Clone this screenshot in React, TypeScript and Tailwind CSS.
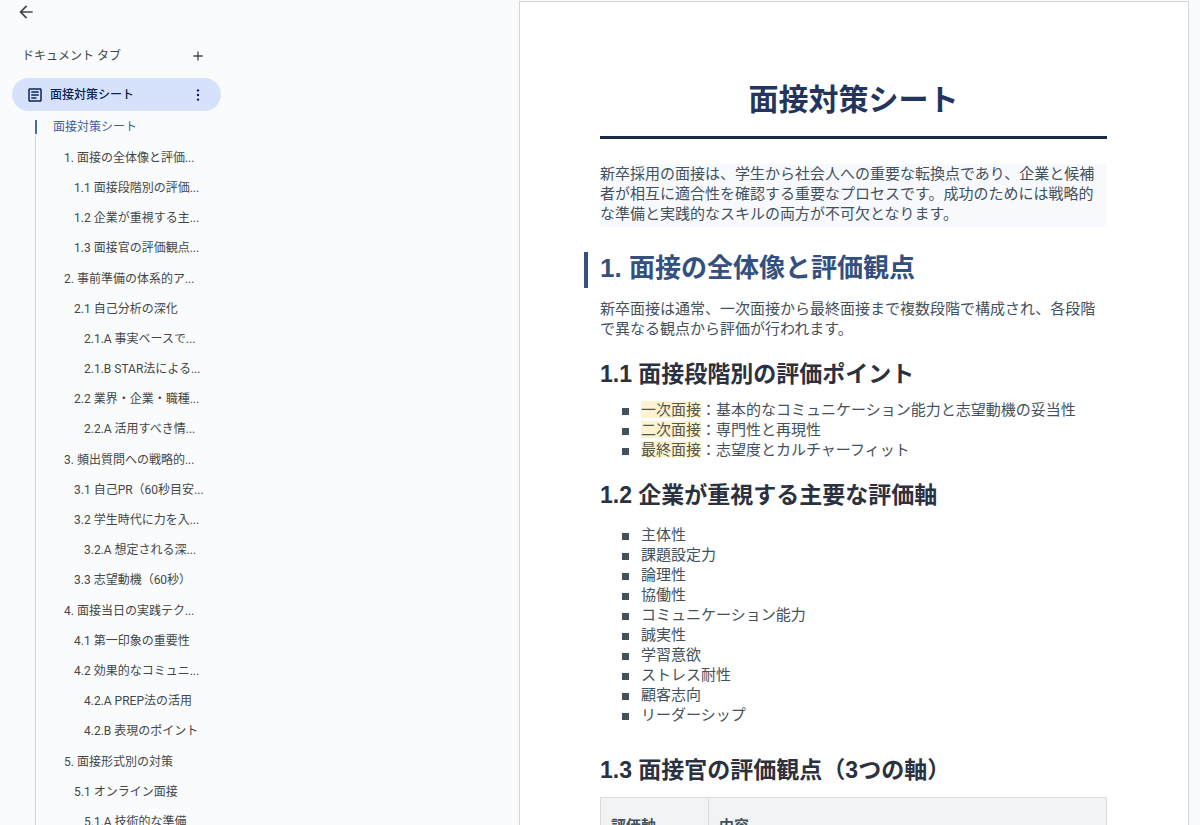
type OutlineItem = { label: string; level: 1 | 2 | 3 };

const outline: OutlineItem[] = [
  { label: "1. 面接の全体像と評価...", level: 1 },
  { label: "1.1 面接段階別の評価...", level: 2 },
  { label: "1.2 企業が重視する主...", level: 2 },
  { label: "1.3 面接官の評価観点...", level: 2 },
  { label: "2. 事前準備の体系的ア...", level: 1 },
  { label: "2.1 自己分析の深化", level: 2 },
  { label: "2.1.A 事実ベースで...", level: 3 },
  { label: "2.1.B STAR法による...", level: 3 },
  { label: "2.2 業界・企業・職種...", level: 2 },
  { label: "2.2.A 活用すべき情...", level: 3 },
  { label: "3. 頻出質問への戦略的...", level: 1 },
  { label: "3.1 自己PR（60秒目安...", level: 2 },
  { label: "3.2 学生時代に力を入...", level: 2 },
  { label: "3.2.A 想定される深...", level: 3 },
  { label: "3.3 志望動機（60秒）", level: 2 },
  { label: "4. 面接当日の実践テク...", level: 1 },
  { label: "4.1 第一印象の重要性", level: 2 },
  { label: "4.2 効果的なコミュニ...", level: 2 },
  { label: "4.2.A PREP法の活用", level: 3 },
  { label: "4.2.B 表現のポイント", level: 3 },
  { label: "5. 面接形式別の対策", level: 1 },
  { label: "5.1 オンライン面接", level: 2 },
  { label: "5.1.A 技術的な準備", level: 3 },
];

const levelClass = {
  1: "mt-px pl-7",
  2: "pl-[38px]",
  3: "pl-12",
};

const stages = [
  { name: "一次面接", text: "：基本的なコミュニケーション能力と志望動機の妥当性" },
  { name: "二次面接", text: "：専門性と再現性" },
  { name: "最終面接", text: "：志望度とカルチャーフィット" },
];

const criteria = [
  "主体性",
  "課題設定力",
  "論理性",
  "協働性",
  "コミュニケーション能力",
  "誠実性",
  "学習意欲",
  "ストレス耐性",
  "顧客志向",
  "リーダーシップ",
];

function Bullet() {
  return <span className="mt-[3px] size-[7px] shrink-0 bg-[#43515c]" />;
}

function Sidebar() {
  return (
    <aside className="w-[221px] shrink-0 overflow-hidden font-['Roboto','Noto_Sans_CJK_JP',sans-serif] text-xs text-[#444746]">
      <button aria-label="戻る" className="ml-3.5 flex size-6 items-center justify-center">
        <svg viewBox="0 0 24 24" className="size-5" fill="currentColor">
          <path d="M20 11H7.83l5.59-5.59L12 4l-8 8 8 8 1.41-1.41L7.83 13H20v-2z" />
        </svg>
      </button>

      <div className="mt-4 flex h-8 items-center justify-between pl-[22px] pr-[15px]">
        <h2>ドキュメント タブ</h2>
        <button aria-label="タブを追加" className="flex size-4 items-center justify-center">
          <svg viewBox="0 0 16 16" className="size-4" fill="none" stroke="currentColor" strokeWidth="1.3">
            <path d="M8 3.4v9.2M3.4 8h9.2" />
          </svg>
        </button>
      </div>

      <div className="ml-3 mt-1.5 flex h-[33px] items-center rounded-full bg-[#d6e2fb] pl-3.5 pr-[15px] text-[#0b2353]">
        <svg viewBox="0 0 24 24" className="size-[18px]" fill="currentColor">
          <path d="M19 5v14H5V5h14m0-2H5c-1.100 0-2 .9-2 2v14c0 1.100.9 2 2 2h14c1.100 0 2-.9 2-2V5c0-1.100-.9-2-2-2z" />
          <path d="M14 17H7v-2h7v2zm3-4H7v-2h10v2zm0-4H7V7h10v2z" />
        </svg>
        <a href="#top" className="ml-1.5 grow font-medium">面接対策シート</a>
        <button aria-label="タブのオプション" className="flex size-4 items-center justify-center">
          <svg viewBox="0 0 16 16" className="size-4" fill="currentColor">
            <circle cx="8" cy="3.400" r="1.2" />
            <circle cx="8" cy="8" r="1.2" />
            <circle cx="8" cy="12.6" r="1.2" />
          </svg>
        </button>
      </div>

      <nav aria-label="アウトライン" className="ml-[35px]">
        <a href="#top" className="flex h-8 items-center text-[#3a5fa8]">
          <span className="h-3.5 w-0.5 bg-[#4a6aa3]" />
          <span className="ml-4">面接対策シート</span>
        </a>
        <ul className="-mt-2 border-l border-[#d5d7da] pt-[7px]">
          {outline.map((item) => (
            <li key={item.label} className={levelClass[item.level]}>
              <a href="#top" className="flex h-[30px] items-center whitespace-nowrap">
                {item.label}
              </a>
            </li>
          ))}
        </ul>
      </nav>
    </aside>
  );
}

export default function App() {
  return (
    <div className="flex h-screen justify-between overflow-hidden bg-[#f9fbfd]">
      <Sidebar />
      <main className="mr-[11px] mt-px w-full max-w-[670px] overflow-y-auto border border-b-0 border-[#d3d5d8] bg-white pb-20 pl-20 pr-[81px] pt-20 font-['Liberation_Sans','Noto_Sans_CJK_JP',sans-serif] text-[15px] leading-5 text-[#43515c] [scrollbar-width:none]">
        <h1 id="top" className="border-b-[3px] border-[#1a2b42] pb-[18px] text-center text-[30px] font-bold leading-9 text-[#23355c]">
          面接対策シート
        </h1>
        <p className="mt-[25px] bg-[#f7f9fc] pb-[3px]">
          新卒採用の面接は、学生から社会人への重要な転換点であり、企業と候補者が相互に適合性を確認する重要なプロセスです。成功のためには戦略的な準備と実践的なスキルの両方が不可欠となります。
        </p>

        <h2 className="-ml-4 mt-[25px] border-l-4 border-[#34507f] pb-1 pl-3 text-[26px] font-bold leading-8 text-[#34507f]">
          1. 面接の全体像と評価観点
        </h2>
        <p className="mt-[11px]">
          新卒面接は通常、一次面接から最終面接まで複数段階で構成され、各段階で異なる観点から評価が行われます。
        </p>

        <h3 className="mt-[21px] text-[23px] font-bold leading-7 text-[#2c313f]">1.1 面接段階別の評価ポイント</h3>
        <ul className="mt-3 pl-[22px]">
          {stages.map((stage) => (
            <li key={stage.name} className="flex items-center gap-3">
              <Bullet />
              <span>
                <mark className="bg-[#fdf3d0] text-[#55564f]">{stage.name}</mark>
                {stage.text}
              </span>
            </li>
          ))}
        </ul>

        <h3 className="mt-[21px] text-[23px] font-bold leading-7 text-[#2c313f]">1.2 企業が重視する主要な評価軸</h3>
        <ul className="mt-4 pl-[22px]">
          {criteria.map((item) => (
            <li key={item} className="flex items-center gap-3">
              <Bullet />
              <span>{item}</span>
            </li>
          ))}
        </ul>

        <h3 className="mt-[31px] text-[23px] font-bold leading-7 text-[#2c313f]">1.3 面接官の評価観点（3つの軸）</h3>
        <table className="mt-[13px] w-full border-collapse bg-[#f1f3f5] text-left">
          <thead>
            <tr>
              <th className="w-[108px] border border-[#d9dcdf] px-2.5 py-[18px]">評価軸</th>
              <th className="border border-[#d9dcdf] px-2.5 py-[18px]">内容</th>
            </tr>
          </thead>
        </table>
      </main>
    </div>
  );
}
